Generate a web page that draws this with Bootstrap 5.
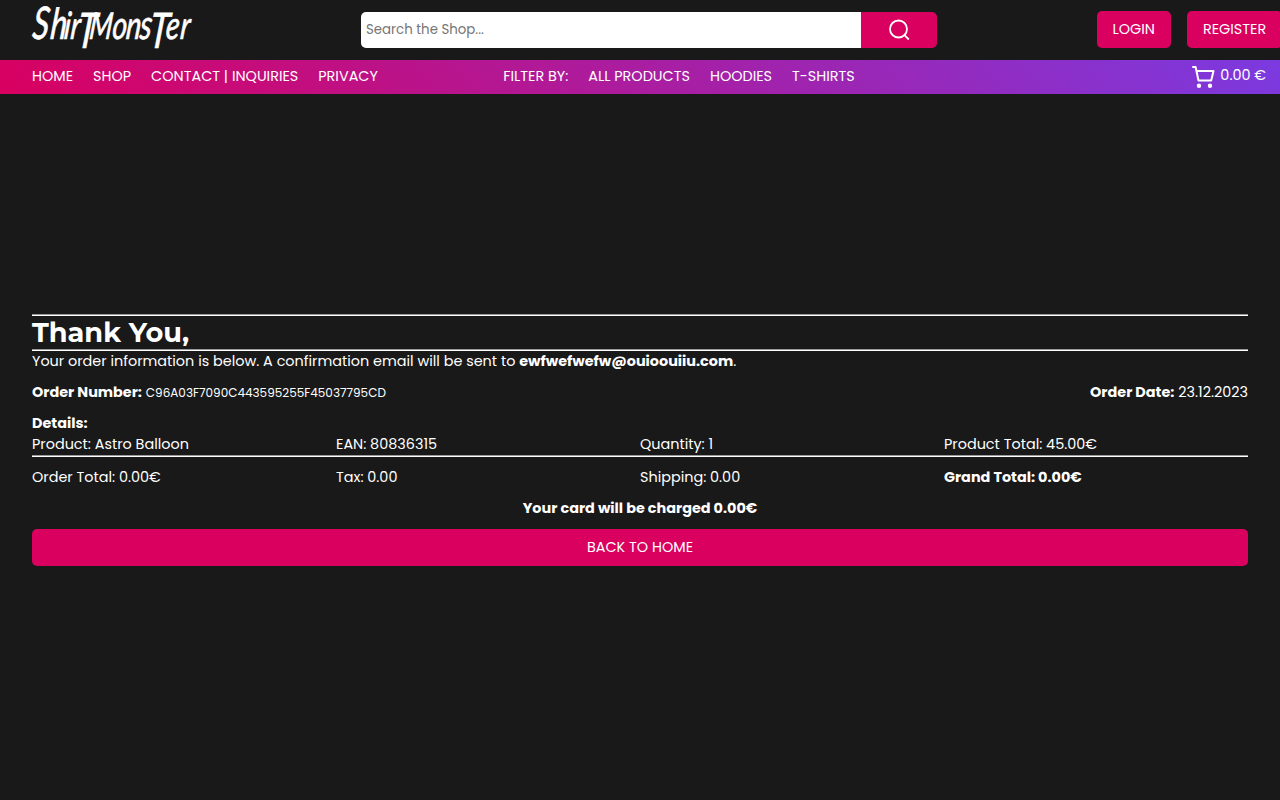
<!DOCTYPE html>
<html lang="en">
<head>
<meta charset="utf-8">
<meta name="viewport" content="width=device-width, initial-scale=1">
<title>ShirtMonster - Thank You</title>
<link href="https://cdn.jsdelivr.net/npm/bootstrap@5.3.0/dist/css/bootstrap.min.css" rel="stylesheet">
<style>
:root{--pink:#d90060}
body{background:#191919;color:#fff;font-family:Poppins,Inter,sans-serif;font-size:14.4px;line-height:21px;overflow:hidden}
.topbar{height:60px;padding-left:32px}
.brand-box{width:329px}
.brand-box svg{overflow:visible}
.brand-box .tall{text-transform:uppercase}
.search-box{width:576px;height:36px}
.search-box .form-control{width:500px;flex:none;border:0;border-radius:5px 0 0 5px;padding:0 5px 1px;font-size:13.333px;background:#fff}
.search-box .form-control::placeholder{color:#757575;opacity:1}
.btn-pink{background:var(--pink);color:#fff;border:0;border-radius:5px;font-size:14.4px;line-height:21px;padding:8px 16px;height:37px}
.btn-pink:hover{background:#b80052;color:#fff}
.search-box .btn-pink{border-radius:0 5px 5px 0;width:76px;height:36px;padding:0}
.account{margin:0 -2.150px 1px 0}
.menubar{height:34px;padding:0 14px 2px 32px;background:linear-gradient(45deg,var(--pink),#7b3ae0)}
.menubar .nav{gap:20px}
.menubar .nav-link{padding:0;color:#fff;white-space:nowrap}
.menubar .cart-link{padding-bottom:2px}
.filters{margin-left:125.400px}
.order{padding:220px 32px 0}
.order h1{font-family:Montserrat,Inter,sans-serif;font-size:27.2px;line-height:33px;font-weight:700}
.rule{height:2px;border-top:1px solid #999;border-bottom:1px solid #fff}
.gap-line{margin-bottom:10px}
.order-id{font-size:12px}
</style>
</head>
<body>
<header class="topbar d-flex align-items-center">
  <a class="brand-box flex-shrink-0" href="#" aria-label="ShirtMonster">
    <svg class="d-block" width="164" height="56" viewBox="32 2 164 56" fill="#fff" stroke="#fff" stroke-width=".7" font-family="Lato, sans-serif" font-style="italic">
      <text transform="translate(2.300 0) skewX(-6) scale(.722 1)" y="39" font-size="39"><tspan x="46" font-size="45">S</tspan><tspan x="71" font-size="43">h</tspan><tspan x="90" font-size="38">i</tspan><tspan x="99">r</tspan><tspan class="tall" x="109" y="48" font-size="49">t</tspan><tspan x="125" y="39" font-size="37">M</tspan><tspan x="157" font-size="39">o</tspan><tspan x="176">n</tspan><tspan x="195" font-size="41">s</tspan><tspan class="tall" x="209" y="48" font-size="49">t</tspan><tspan x="231" y="39" font-size="39">e</tspan><tspan x="251">r</tspan></text>
    </svg>
  </a>
  <form class="search-box d-flex flex-shrink-0">
    <input class="form-control" type="text" placeholder="Search the Shop...">
    <button class="btn btn-pink d-flex align-items-center justify-content-center" type="button" aria-label="Search">
      <svg width="24" height="24" viewBox="0 0 24 24" fill="none" stroke="#fff" stroke-width="1.8"><circle cx="11.500" cy="11" r="8.500"/><path d="M17.500 17.200L21.800 21.500"/></svg>
    </button>
  </form>
  <div class="account d-flex flex-shrink-0 gap-3 ms-auto">
    <a class="btn btn-pink" href="#">LOGIN</a>
    <a class="btn btn-pink" href="#">REGISTER</a>
  </div>
</header>
<nav class="menubar d-flex align-items-center">
  <div class="nav flex-nowrap">
    <a class="nav-link" href="#">HOME</a>
    <a class="nav-link" href="#">SHOP</a>
    <a class="nav-link" href="#">CONTACT | INQUIRIES</a>
    <a class="nav-link" href="#">PRIVACY</a>
  </div>
  <div class="nav flex-nowrap filters">
    <span>FILTER BY:</span>
    <a class="nav-link" href="#">ALL PRODUCTS</a>
    <a class="nav-link" href="#">HOODIES</a>
    <a class="nav-link" href="#">T-SHIRTS</a>
  </div>
  <a class="nav-link cart-link d-flex align-items-center ms-auto" href="#">
    <svg class="mt-1 me-1" width="24" height="24" viewBox="0 0 24 24" fill="none" stroke="#fff" stroke-width="2" stroke-linecap="round" stroke-linejoin="round"><path d="M1 2h2.600l2.900 13.500h12.700L21.500 6H4.500"/><circle cx="7" cy="20.700" r="1.200" fill="#fff"/><circle cx="18" cy="20.700" r="1.200" fill="#fff"/></svg>
    0.00 €
  </a>
</nav>
<main class="order">
  <div class="rule"></div>
  <h1 class="m-0">Thank You,</h1>
  <div class="rule"></div>
  <div class="gap-line">Your order information is below. A confirmation email will be sent to <b>ewfwefwefw@ouioouiiu.com</b>.</div>
  <div class="d-flex justify-content-between gap-line">
    <div><b>Order Number:</b> <span class="order-id">C96A03F7090C443595255F45037795CD</span></div>
    <div><b>Order Date:</b> 23.12.2023</div>
  </div>
  <div><b>Details:</b></div>
  <div class="row g-0">
    <div class="col-3">Product: Astro Balloon</div>
    <div class="col-3">EAN: 80836315</div>
    <div class="col-3">Quantity: 1</div>
    <div class="col-3">Product Total: 45.00€</div>
  </div>
  <div class="rule gap-line"></div>
  <div class="row g-0 gap-line">
    <div class="col-3">Order Total: 0.00€</div>
    <div class="col-3">Tax: 0.00</div>
    <div class="col-3">Shipping: 0.00</div>
    <div class="col-3"><b>Grand Total: 0.00€</b></div>
  </div>
  <div class="text-center gap-line"><b>Your card will be charged 0.00€</b></div>
  <a class="btn btn-pink d-block" href="#">BACK TO HOME</a>
</main>
<script src="https://cdn.jsdelivr.net/npm/bootstrap@5.3.0/dist/js/bootstrap.bundle.min.js"></script>
</body>
</html>
